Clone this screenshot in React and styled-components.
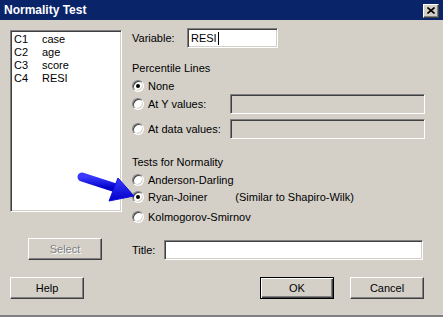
import React from "react";
import styled, { createGlobalStyle, css } from "styled-components";

const GlobalStyle = createGlobalStyle`
  html, body { margin: 0; padding: 0; background: #d4d0c8; }
  body {
    font-family: "Liberation Sans", Arial, sans-serif;
    font-size: 11px;
    color: #000;
  }
  * { box-sizing: border-box; }
`;

const raised = css`
  border: 1px solid;
  border-color: #ffffff #404040 #404040 #ffffff;
  box-shadow: inset -1px -1px #808080, inset 1px 1px #d4d0c8;
  background: #d4d0c8;
`;

const sunken = css`
  border: 1px solid;
  border-color: #808080 #ffffff #ffffff #808080;
  box-shadow: inset 1px 1px #404040, inset -1px -1px #d4d0c8;
`;

const Window = styled.div`
  position: relative;
  width: 443px;
  height: 317px;
  background: #d4d0c8;
  border-bottom: 2px solid #808080;
  display: flex;
  flex-direction: column;
  overflow: hidden;
`;

const TitleBar = styled.div`
  height: 20px;
  background: #0a246a;
  color: #fff;
  display: flex;
  align-items: center;
  justify-content: space-between;
  padding: 0 4px 0 4px;
  font-weight: bold;
  font-size: 12px;
`;

const CloseButton = styled.div`
  ${raised};
  width: 16px;
  height: 14px;
  display: flex;
  align-items: center;
  justify-content: center;
  margin-top: 1px;
`;

const Body = styled.div`
  display: grid;
  grid-template-columns: 112px 294px;
  grid-template-rows: auto 22px;
  column-gap: 9px;
  row-gap: 13px;
  padding: 10px 18px 0 10px;
`;

const ListBox = styled.div`
  ${sunken};
  background: #fff;
  height: 182px;
  padding: 2px 2px 0 3px;
  align-self: start;
`;

const ListItem = styled.div`
  display: grid;
  grid-template-columns: 28px 1fr;
  height: 13px;
  line-height: 13px;
`;

const Panel = styled.div`
  display: flex;
  flex-direction: column;
  margin-top: -2px;
`;

const FieldRow = styled.div`
  display: grid;
  grid-template-columns: ${(p) => p.$label}px ${(p) => p.$field}px;
  align-items: center;
  height: 20px;
  margin-top: ${(p) => p.$top || 0}px;
`;

const Label = styled.span`
  white-space: nowrap;
  padding-left: 1px;
`;

const TextField = styled.div`
  ${sunken};
  background: ${(p) => (p.$disabled ? "#d4d0c8" : "#fff")};
  height: 20px;
  padding: 0 3px;
  display: flex;
  align-items: center;
`;

const Caret = styled.span`
  display: inline-block;
  width: 1px;
  height: 13px;
  background: #000;
  margin-left: 1px;
`;

const GroupTitle = styled.div`
  height: 13px;
  line-height: 13px;
  margin-top: ${(p) => p.$top}px;
  padding-left: 1px;
`;

const RadioRow = styled.div`
  display: flex;
  align-items: center;
  gap: 4px;
  height: ${(p) => p.$h || 17}px;
  margin-top: ${(p) => p.$top || 0}px;
  white-space: nowrap;
`;

const RadioCircle = styled.span`
  ${sunken};
  flex: none;
  width: 12px;
  height: 12px;
  border-radius: 50%;
  background: #fff;
  margin-left: 1px;
  display: flex;
  align-items: center;
  justify-content: center;
  &::after {
    content: "";
    width: 4px;
    height: 4px;
    border-radius: 50%;
    background: #000;
    display: ${(p) => (p.$checked ? "block" : "none")};
  }
`;

const Note = styled.span`
  margin-left: 28px;
`;

const Radio = ({ checked, children }) => (
  <>
    <RadioCircle $checked={checked} />
    <span>{children}</span>
  </>
);

const Button = styled.div`
  ${raised};
  ${(p) =>
    p.$default &&
    css`
      border: 1px solid #000;
      box-shadow: inset 1px 1px #ffffff, inset -1px -1px #404040,
        inset -2px -2px #808080;
    `}
  width: ${(p) => p.$w || 74}px;
  height: 22px;
  display: flex;
  align-items: center;
  justify-content: center;
  color: ${(p) => (p.$disabled ? "#808080" : "#000")};
  text-shadow: ${(p) => (p.$disabled ? "1px 1px #ffffff" : "none")};
`;

const SelectCell = styled.div`
  display: flex;
  justify-content: center;
  align-items: center;
  padding-right: 2px;
`;

const TitleRow = styled.div`
  display: grid;
  grid-template-columns: 33px 259px;
  align-items: center;
  padding-top: 2px;
`;

const Footer = styled.div`
  display: flex;
  align-items: center;
  padding: 17px 19px 0 10px;
`;

const Spacer = styled.div`
  flex: 1;
`;

const FooterGap = styled.div`
  width: 16px;
`;

const ArrowOverlay = styled.svg`
  position: absolute;
  left: 68px;
  top: 165px;
  pointer-events: none;
`;

const columns = [
  ["C1", "case"],
  ["C2", "age"],
  ["C3", "score"],
  ["C4", "RESI"],
];

export default function App() {
  return (
    <>
      <GlobalStyle />
      <Window>
        <TitleBar>
          <span>Normality Test</span>
          <CloseButton>
            <svg width="8" height="7" viewBox="0 0 8 7">
              <path d="M0.5 0.5 L7.5 6.5 M7.5 0.5 L0.5 6.5" stroke="#000" strokeWidth="1.6" />
            </svg>
          </CloseButton>
        </TitleBar>
        <Body>
          <ListBox>
            {columns.map(([c, n]) => (
              <ListItem key={c}>
                <span>{c}</span>
                <span>{n}</span>
              </ListItem>
            ))}
          </ListBox>
          <Panel>
            <FieldRow $label={56} $field={91}>
              <Label>Variable:</Label>
              <TextField>
                RESI
                <Caret />
              </TextField>
            </FieldRow>
            <GroupTitle $top={14}>Percentile Lines</GroupTitle>
            <RadioRow $h={17} $top={2}>
              <Radio checked>None</Radio>
            </RadioRow>
            <FieldRow $label={99} $field={195}>
              <RadioRow $h={20}>
                <Radio>At Y values:</Radio>
              </RadioRow>
              <TextField $disabled />
            </FieldRow>
            <FieldRow $label={99} $field={195} $top={5}>
              <RadioRow $h={20}>
                <Radio>At data values:</Radio>
              </RadioRow>
              <TextField $disabled />
            </FieldRow>
            <GroupTitle $top={17}>Tests for Normality</GroupTitle>
            <RadioRow $top={2}>
              <Radio>Anderson-Darling</Radio>
            </RadioRow>
            <RadioRow>
              <Radio checked>
                Ryan-Joiner<Note>(Similar to Shapiro-Wilk)</Note>
              </Radio>
            </RadioRow>
            <RadioRow $top={3}>
              <Radio>Kolmogorov-Smirnov</Radio>
            </RadioRow>
          </Panel>
          <SelectCell>
            <Button $disabled>Select</Button>
          </SelectCell>
          <TitleRow>
            <Label>Title:</Label>
            <TextField />
          </TitleRow>
        </Body>
        <Footer>
          <Button>Help</Button>
          <Spacer />
          <Button $default>OK</Button>
          <FooterGap />
          <Button>Cancel</Button>
        </Footer>
        <ArrowOverlay width="72" height="42" viewBox="0 0 72 42">
          <defs>
            <linearGradient id="arrowGrad" x1="0" y1="0" x2="0" y2="1">
              <stop offset="0" stopColor="#3a3aff" />
              <stop offset="1" stopColor="#0000c8" />
            </linearGradient>
          </defs>
          <line x1="14" y1="12" x2="48" y2="23" stroke="url(#arrowGrad)" strokeWidth="9" strokeLinecap="round" />
          <polygon points="66,31 41,36 50,13" fill="url(#arrowGrad)" stroke="#1010e0" strokeWidth="1" strokeLinejoin="round" />
        </ArrowOverlay>
      </Window>
    </>
  );
}
